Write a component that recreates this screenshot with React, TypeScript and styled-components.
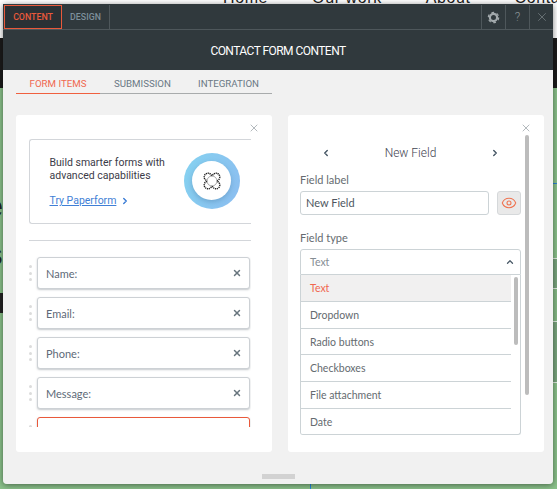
import {X, ChevronLeft, ChevronRight, ChevronUp, Eye} from 'lucide-react';
import styled, {createGlobalStyle} from 'styled-components';

const fieldNames = ['Name:', 'Email:', 'Phone:', 'Message:'];
const typeOptions = ['Text', 'Dropdown', 'Radio buttons', 'Checkboxes', 'File attachment', 'Date'];

const GearIcon = () => (
  <svg width='13' height='13' viewBox='0 0 13 13'>
    <circle cx='6.5' cy='6.5' r='3.6' fill='none' stroke='#a2a9ac' strokeWidth='2.2' />
    <circle cx='6.5' cy='6.5' r='5.2' fill='none' stroke='#a2a9ac' strokeWidth='1.2' strokeDasharray='2.7 2.75' />
  </svg>
);

const PaperformIcon = () => (
  <svg width='18' height='18' viewBox='0 0 18 18'>
    <g fill='none' stroke='#222' strokeWidth='1.4' strokeDasharray='1.2 0.7'>
      <circle cx='5' cy='5' r='3.8' />
      <circle cx='13' cy='5' r='3.8' />
      <circle cx='5' cy='13' r='3.8' />
      <circle cx='13' cy='13' r='3.8' />
    </g>
    <circle cx='9' cy='9' r='5' fill='#fff' stroke='#555' strokeWidth='0.5' />
  </svg>
);

const App = () => {
  return (
    <Page>
      <GlobalStyle />
      <SiteNav>
        <SiteLink>Home</SiteLink>
        <SiteLink>Our work</SiteLink>
        <SiteLink>About</SiteLink>
        <SiteLink>Contact</SiteLink>
      </SiteNav>
      <SiteHero />
      <SiteBand />
      <HeroGlyph $top={188}>e</HeroGlyph>
      <HeroGlyph $top={236}>s</HeroGlyph>
      <SideRail>
        <SideTick />
        <SideBlock $height={30} />
        <SideBlock $height={33} $light />
        <SideBlock $height={62} />
      </SideRail>
      <BottomTick />
      <Modal>
        <TopBar>
          <ModeTab $active>CONTENT</ModeTab>
          <ModeTab>DESIGN</ModeTab>
          <TopActions>
            <TopAction><GearIcon /></TopAction>
            <TopAction>?</TopAction>
            <TopAction><X size={14} strokeWidth={1} /></TopAction>
          </TopActions>
        </TopBar>
        <Title>CONTACT FORM CONTENT</Title>
        <Body>
          <Tabs>
            <Tab $active $width={84}>FORM ITEMS</Tab>
            <Tab $width={70}>SUBMISSION</Tab>
            <Tab $width={60}>INTEGRATION</Tab>
          </Tabs>
          <Panels>
            <Panel>
              <PanelClose><X size={12} strokeWidth={1.2} /></PanelClose>
              <LeftScroll>
                <Promo>
                  <PromoText>
                    <PromoTitle>Build smarter forms with<br />advanced capabilities</PromoTitle>
                    <PromoLink>
                      <a>Try Paperform</a>
                      <ChevronRight size={10} strokeWidth={3.5} />
                    </PromoLink>
                  </PromoText>
                  <PromoRing>
                    <PromoDisc><PaperformIcon /></PromoDisc>
                  </PromoRing>
                </Promo>
                <Divider />
                <FieldList>
                  {fieldNames.map(name => (
                    <FieldRow key={name}>
                      <DragDots><i /><i /><i /></DragDots>
                      <FieldCard>
                        {name}
                        <X size={10} strokeWidth={3.5} />
                      </FieldCard>
                    </FieldRow>
                  ))}
                  <FieldRow>
                    <DragDots><i /><i /><i /></DragDots>
                    <FieldCard $selected />
                  </FieldRow>
                </FieldList>
              </LeftScroll>
            </Panel>
            <Panel>
              <PanelClose><X size={12} strokeWidth={1.2} /></PanelClose>
              <PanelScrollbar />
              <RightContent>
                <FieldNav>
                  <ChevronLeft size={10} strokeWidth={3.5} />
                  <FieldNavTitle>New Field</FieldNavTitle>
                  <ChevronRight size={10} strokeWidth={3.5} />
                </FieldNav>
                <Label>Field label</Label>
                <InputRow>
                  <TextInput>New Field</TextInput>
                  <EyeButton><Eye size={16} strokeWidth={1.6} /></EyeButton>
                </InputRow>
                <Label $spaced>Field type</Label>
                <SelectBox>
                  Text
                  <ChevronUp size={10} strokeWidth={3} />
                </SelectBox>
                <OptionList>
                  <OptionScrollbar />
                  {typeOptions.map((option, index) => (
                    <Option key={option} $active={index === 0}>{option}</Option>
                  ))}
                </OptionList>
              </RightContent>
            </Panel>
          </Panels>
          <Footer><Handle /></Footer>
        </Body>
      </Modal>
    </Page>
  );
};

const GlobalStyle = createGlobalStyle`
  html, body {
    margin: 0;
    padding: 0;
    background: #8bc28b;
  }
  * {
    box-sizing: border-box;
  }
`;
const Page = styled.div`
  position: relative;
  width: 557px;
  height: 489px;
  overflow: hidden;
  background: #8bc28b;
  font-family: 'Roboto', sans-serif;
`;
const SiteNav = styled.div`
  display: flex;
  gap: 44px;
  height: 38px;
  padding-left: 223px;
  background: #fff;
  white-space: nowrap;
`;
const SiteLink = styled.span`
  margin-top: -12px;
  font-family: 'Liberation Sans', sans-serif;
  font-size: 16px;
  line-height: 20px;
  letter-spacing: 0.6px;
  color: #222;
`;
const SiteHero = styled.div`
  height: 50px;
  background: #1b1b1b;
`;
const SiteBand = styled.div`
  height: 20px;
  margin-top: 205px;
  background: #222;
`;
const HeroGlyph = styled.span<{$top: number}>`
  position: absolute;
  top: ${({$top}) => $top}px;
  left: -15px;
  font-family: 'Liberation Sans', sans-serif;
  font-size: 32px;
  font-weight: 700;
  line-height: 36px;
  color: #222;
`;
const SideRail = styled.div`
  position: absolute;
  top: 183px;
  right: 0;
  display: flex;
  flex-direction: column;
  width: 4px;
`;
const SideTick = styled.div`
  height: 1px;
  margin-bottom: 74px;
  background: #2b83d8;
`;
const SideBlock = styled.div<{$height: number; $light?: boolean}>`
  height: ${({$height}) => $height}px;
  background: ${({$light}) => ($light ? '#86bb86' : '#7aa67e')};
  border-top: 1px solid #e4efe4;
  &:last-child {
    border-bottom: 1px solid #e4efe4;
  }
`;
const BottomTick = styled.div`
  position: absolute;
  left: 310px;
  bottom: 0;
  width: 1px;
  height: 6px;
  background: #1f87e0;
`;
const Modal = styled.div`
  position: absolute;
  left: 3px;
  top: 4px;
  display: flex;
  flex-direction: column;
  width: 550px;
  height: 480px;
  border-radius: 0 0 4px 4px;
  overflow: hidden;
  box-shadow: 0 1px 6px rgba(0, 0, 0, 0.5);
`;
const TopBar = styled.div`
  display: flex;
  flex: none;
  height: 26px;
  padding-top: 1px;
  background: #30393d;
  border-bottom: 1px solid #4e575b;
`;
const ModeTab = styled.div<{$active?: boolean}>`
  display: flex;
  align-items: center;
  justify-content: center;
  width: ${({$active}) => ($active ? '58px' : '48px')};
  margin-left: ${({$active}) => ($active ? '1px' : '0')};
  font-size: 8.8px;
  font-weight: 500;
  color: ${({$active}) => ($active ? '#e9593b' : '#7d8f9b')};
  background: ${({$active}) => ($active ? '#2a3135' : 'transparent')};
  border: ${({$active}) => ($active ? '1px solid #e9593b' : 'none')};
  border-right: ${({$active}) => ($active ? '1px solid #e9593b' : '1px solid #4e575b')};
`;
const TopActions = styled.div`
  display: flex;
  margin-left: auto;
`;
const TopAction = styled.div`
  display: flex;
  align-items: center;
  justify-content: center;
  width: 24px;
  font-size: 12px;
  font-weight: 300;
  color: #8b9498;
  border-left: 1px solid #4e575b;
`;
const Title = styled.div`
  flex: none;
  height: 40px;
  line-height: 42px;
  text-align: center;
  font-size: 12px;
  letter-spacing: -0.55px;
  color: #fff;
  background: #30393d;
`;
const Body = styled.div`
  display: flex;
  flex: 1;
  flex-direction: column;
  padding: 0 13px;
  background: #f1f1f1;
`;
const Tabs = styled.div`
  display: flex;
  flex: none;
  gap: 14px;
  height: 24px;
  width: 256px;
  border-bottom: 1px solid #a8abac;
`;
const Tab = styled.div<{$active?: boolean; $width: number}>`
  flex: none;
  width: ${({$width}) => $width}px;
  height: 24px;
  line-height: 28px;
  font-size: 9.7px;
  text-align: ${({$active}) => ($active ? 'center' : 'left')};
  white-space: nowrap;
  color: ${({$active}) => ($active ? '#f0674f' : '#6a7884')};
  border-bottom: ${({$active}) => ($active ? '1px solid #f0603f' : 'none')};
`;
const Panels = styled.div`
  display: grid;
  flex: none;
  grid-template-columns: 256px 256px;
  gap: 16px;
  height: 337px;
  margin-top: 21px;
`;
const Panel = styled.div`
  position: relative;
  height: 337px;
  background: #fff;
  border-radius: 3px;
  overflow: hidden;
`;
const PanelClose = styled.div`
  position: absolute;
  top: 7px;
  right: 12px;
  line-height: 0;
  color: #7f8a90;
`;
const LeftScroll = styled.div`
  width: 222px;
  height: 288px;
  margin: 24px 0 0 13px;
  overflow: hidden;
`;
const Promo = styled.div`
  display: flex;
  align-items: center;
  justify-content: space-between;
  height: 85px;
  padding: 0 11.5px 0 19.5px;
  border: 1px solid #d3d6da;
  border-right: none;
  border-radius: 3px 0 0 3px;
`;
const PromoText = styled.div`
  padding-top: 0;
`;
const PromoTitle = styled.div`
  font-size: 10.5px;
  line-height: 13px;
  color: #3b3b48;
`;
const PromoLink = styled.div`
  display: flex;
  align-items: center;
  gap: 4px;
  margin-top: 12px;
  font-size: 10.5px;
  color: #3f7fd6;
  a {
    text-decoration: underline;
  }
`;
const PromoRing = styled.div`
  display: flex;
  align-items: center;
  justify-content: center;
  width: 56px;
  height: 56px;
  margin-bottom: 2px;
  border-radius: 50%;
  background: linear-gradient(110deg, #85d2f0, #8cbdf0);
`;
const PromoDisc = styled.div`
  display: flex;
  align-items: center;
  justify-content: center;
  width: 39px;
  height: 39px;
  border-radius: 50%;
  background: #fff;
  box-shadow: 0 2px 5px rgba(60, 110, 150, 0.35);
`;
const Divider = styled.div`
  height: 1px;
  margin-top: 16px;
  background: #d3d6da;
`;
const FieldList = styled.div`
  display: flex;
  flex-direction: column;
  gap: 8px;
  margin-top: 16px;
`;
const FieldRow = styled.div`
  display: flex;
  gap: 5px;
`;
const DragDots = styled.div`
  display: flex;
  flex-direction: column;
  gap: 3.5px;
  width: 3px;
  padding-top: 8px;
  i {
    width: 3px;
    height: 3px;
    border-radius: 50%;
    background: #dcdcdc;
  }
`;
const FieldCard = styled.div<{$selected?: boolean}>`
  display: flex;
  align-items: center;
  justify-content: space-between;
  width: 213px;
  height: 32px;
  padding: 0 7px 0 8px;
  font-family: 'Lato', sans-serif;
  font-size: 11px;
  color: #5e6a78;
  background: #fff;
  border: 1px solid ${({$selected}) => ($selected ? '#e9593b' : '#cdd1d5')};
  border-radius: 3px;
  box-shadow: 0 1px 2px rgba(90, 100, 110, 0.35);
  svg {
    color: #67757d;
  }
`;
const PanelScrollbar = styled.div`
  position: absolute;
  top: 20px;
  left: 237px;
  width: 4px;
  height: 260px;
  border-radius: 2px;
  background: #bcbcbc;
`;
const RightContent = styled.div`
  display: flex;
  flex-direction: column;
  width: 221px;
  margin-left: 12px;
`;
const FieldNav = styled.div`
  display: flex;
  align-items: center;
  justify-content: space-between;
  height: 16px;
  margin-top: 30px;
  padding: 0 21px;
  color: #4a5a68;
`;
const FieldNavTitle = styled.span`
  font-size: 12px;
  font-weight: 300;
  color: #3f4452;
`;
const Label = styled.div<{$spaced?: boolean}>`
  height: 14px;
  margin-top: ${({$spaced}) => ($spaced ? '16px' : '12px')};
  font-family: 'Lato', sans-serif;
  font-size: 11px;
  line-height: 14px;
  color: #656b70;
`;
const InputRow = styled.div`
  display: flex;
  gap: 8px;
  margin-top: 4px;
`;
const TextInput = styled.div`
  width: 189px;
  height: 24px;
  padding-left: 5px;
  font-family: 'Lato', sans-serif;
  font-size: 11px;
  line-height: 22px;
  color: #4e5660;
  border: 1px solid #ccd3d6;
  border-radius: 3px;
`;
const EyeButton = styled.div`
  display: flex;
  align-items: center;
  justify-content: center;
  width: 24px;
  height: 24px;
  color: #ef7350;
  background: #e9e9e9;
  border: 1px solid #d5d8da;
  border-radius: 3px;
`;
const SelectBox = styled.div`
  display: flex;
  align-items: center;
  justify-content: space-between;
  height: 26px;
  margin-top: 4px;
  padding: 0 5px 0 9px;
  font-family: 'Lato', sans-serif;
  font-size: 10.5px;
  color: #858d94;
  border: 1px solid #ccd3d6;
  border-radius: 3px 3px 0 0;
  svg {
    color: #4a5a68;
  }
`;
const OptionList = styled.div`
  position: relative;
  height: 160px;
  padding-right: 9px;
  border: 1px solid #ccd3d6;
  border-top: none;
  border-radius: 0 0 3px 3px;
  overflow: hidden;
`;
const OptionScrollbar = styled.div`
  position: absolute;
  top: 2px;
  right: 2px;
  width: 4px;
  height: 68px;
  border-radius: 2px;
  background: #bcbcbc;
`;
const Option = styled.div<{$active?: boolean}>`
  height: 26.8px;
  padding-left: 9px;
  font-family: 'Lato', sans-serif;
  font-size: 10.5px;
  line-height: 26px;
  color: ${({$active}) => ($active ? '#f0674f' : '#656b70')};
  background: ${({$active}) => ($active ? '#f1f0f0' : '#fff')};
  border-bottom: 1px solid #ccd3d6;
  &:last-child {
    border-bottom: none;
  }
`;
const Footer = styled.div`
  display: flex;
  flex: 1;
  justify-content: center;
  padding-top: 22px;
`;
const Handle = styled.div`
  width: 33px;
  height: 5px;
  background: #d2d2d2;
`;

export default App;
